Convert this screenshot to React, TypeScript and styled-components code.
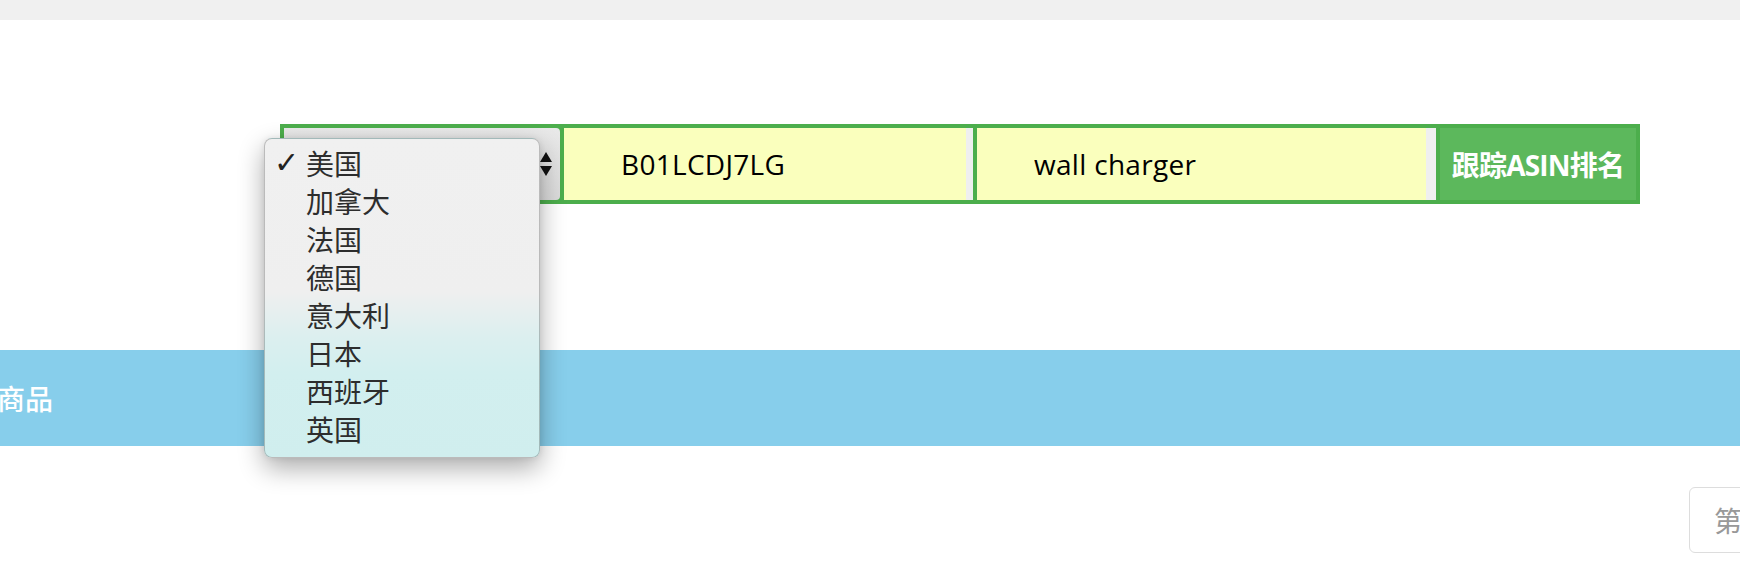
import React from "react";
import styled, { createGlobalStyle } from "styled-components";

const Global = createGlobalStyle`
  html, body { margin: 0; padding: 0; background: #fff; overflow: hidden; }
  body { font-family: "Open Sans", "Noto Sans CJK SC", sans-serif; }
  * { box-sizing: border-box; }
`;

const Page = styled.div`
  width: 1740px;
  height: 564px;
  overflow: hidden;
  display: flex;
  flex-direction: column;
`;

const TopStrip = styled.div`
  flex: none;
  height: 20px;
  background: #f0f0f0;
`;

const SearchSection = styled.section`
  flex: none;
  padding: 104px 0 0 280px;
`;

const SearchBar = styled.form`
  display: flex;
  gap: 4px;
  width: 1360px;
  height: 80px;
  margin: 0;
  border: 4px solid #4cae4c;
  background: #4cae4c;
`;

const SelectCell = styled.div`
  position: relative;
  flex: none;
  width: 276px;
  display: flex;
  align-items: center;
  justify-content: flex-end;
  padding-right: 8px;
  background: linear-gradient(#e9e9e9, #dadada);
  border-top-right-radius: 4px;
  border-bottom-right-radius: 4px;
`;

const Field = styled.input<{ $width: number; $strip: number }>`
  flex: none;
  width: ${(p) => p.$width}px;
  height: 100%;
  margin: 0;
  border: none;
  border-right: ${(p) => p.$strip}px solid #efefef;
  outline: none;
  padding: 0 0 0 57px;
  background: #faffbd;
  color: #000;
  font-family: "Open Sans", "Noto Sans CJK SC", sans-serif;
  font-size: 28px;
  letter-spacing: 0.3px;
`;

const TrackButton = styled.button`
  flex: 1;
  margin: 0;
  border: none;
  padding: 0;
  background: #5cb85c;
  color: #fff;
  font-family: "Open Sans", "Noto Sans CJK SC", sans-serif;
  font-size: 28px;
  font-weight: 700;
  letter-spacing: -0.8px;
`;

const Menu = styled.ul`
  position: absolute;
  left: -20px;
  top: 10px;
  z-index: 10;
  width: 276px;
  height: 320px;
  margin: 0;
  padding: 5px 0 9px;
  list-style: none;
  border: 1px solid rgba(0, 0, 0, 0.22);
  border-radius: 8px;
  background: linear-gradient(
    to bottom,
    #f0f0f0 0%,
    #efefef 48%,
    #dcefef 62%,
    #d2efef 74%,
    #d0eeee 100%
  );
  box-shadow: 0 10px 26px rgba(0, 0, 0, 0.33), 0 0 6px rgba(0, 0, 0, 0.08);
`;

const MenuItem = styled.li`
  display: flex;
  align-items: center;
  height: 38px;
  color: #2d2d2d;
  font-family: "Noto Sans CJK SC", sans-serif;
  font-size: 28px;
  line-height: 38px;
`;

const Check = styled.span`
  flex: none;
  width: 41px;
  padding-left: 9px;
  font-family: "DejaVu Sans", sans-serif;
  font-size: 30px;
  font-weight: 700;
  color: #222;
`;

const Band = styled.div`
  flex: none;
  margin-top: 146px;
  height: 96px;
  display: flex;
  align-items: center;
  background: #87ceeb;
  color: #fff;
  font-family: "Noto Sans CJK SC", sans-serif;
  font-size: 28px;
`;

const BandTitle = styled.h2`
  margin: 0 0 0 -3px;
  font-size: inherit;
  font-weight: 500;
`;

const Pager = styled.nav`
  flex: none;
  display: flex;
  margin-top: 41px;
  padding-left: 1689px;
`;

const PageButton = styled.span`
  flex: none;
  display: flex;
  align-items: center;
  height: 66px;
  padding: 0 24px;
  border: 1px solid #dddddd;
  border-radius: 6px;
  color: #999;
  font-family: "Noto Sans CJK SC", sans-serif;
  font-size: 28px;
  white-space: nowrap;
`;

const countries = ["美国", "加拿大", "法国", "德国", "意大利", "日本", "西班牙", "英国"];

function Arrows() {
  return (
    <svg width="12" height="25" viewBox="0 0 12 25">
      <path d="M6 0 L12 10 L0 10 Z" fill="#111" />
      <path d="M0 14 L12 14 L6 24 Z" fill="#111" />
    </svg>
  );
}

export default function App() {
  return (
    <>
      <Global />
      <Page>
        <TopStrip />
        <SearchSection>
          <SearchBar onSubmit={(e) => e.preventDefault()}>
            <SelectCell>
              <Arrows />
              <Menu>
                {countries.map((c, i) => (
                  <MenuItem key={c}>
                    <Check>{i === 0 ? "✓" : ""}</Check>
                    {c}
                  </MenuItem>
                ))}
              </Menu>
            </SelectCell>
            <Field $width={409} $strip={7} value="B01LCDJ7LG" readOnly />
            <Field $width={459} $strip={10} value="wall charger" readOnly />
            <TrackButton type="submit">跟踪ASIN排名</TrackButton>
          </SearchBar>
        </SearchSection>
        <Band>
          <BandTitle>商品</BandTitle>
        </Band>
        <Pager>
          <PageButton>第 1 页</PageButton>
        </Pager>
      </Page>
    </>
  );
}
